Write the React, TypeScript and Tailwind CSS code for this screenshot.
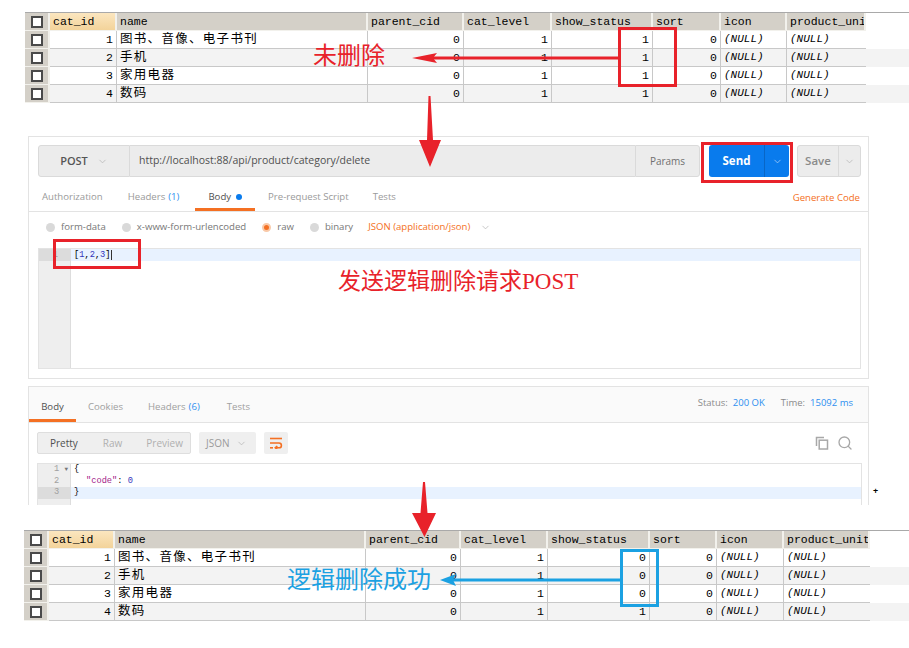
import React from 'react';
import { ChevronDown, Search } from 'lucide-react';

const TOP_W = ['w-[25px]', 'w-[67px]', 'w-[251px]', 'w-[96px]', 'w-[88px]', 'w-[101px]', 'w-[68px]', 'w-[66px]', 'w-[79px]'];
const BOT_W = ['w-[25px]', 'w-[66px]', 'w-[251px]', 'w-[95px]', 'w-[87px]', 'w-[102px]', 'w-[67px]', 'w-[67px]', 'w-[86px]'];
const HEAD = ['cat_id', 'name', 'parent_cid', 'cat_level', 'show_status', 'sort', 'icon', 'product_unit'];
const ROWS = [
  { id: 1, name: '图书、音像、电子书刊' },
  { id: 2, name: '手机' },
  { id: 3, name: '家用电器' },
  { id: 4, name: '数码' },
];

const CheckBox = () => <span className="block w-[12px] h-[12px] border-2 border-[#4a4a4a] bg-white" />;

// navicat style grid
function DbTable({ w, status }: { w: string[]; status: number[] }) {
  const cell = 'shrink-0 overflow-hidden whitespace-nowrap px-[3px] leading-[17px]';
  return (
    <div className="border-t border-[#a9a9a9] font-['Liberation_Mono','Noto_Sans_CJK_SC',monospace] text-[11.5px] text-black">
      <div className="flex h-[18px]">
        <div className={`${w[0]} shrink-0 flex items-center justify-center bg-[#d4d0c8] border-r-2 border-b border-[#f2f1ec]`}>
          <CheckBox />
        </div>
        {HEAD.map((h, i) => (
          <div
            key={h}
            className={`${w[i + 1]} ${cell} border-r-2 border-b border-[#f2f1ec] ${i === 0 ? 'bg-gradient-to-b from-[#fbe6bf] to-[#f3d39a]' : 'bg-[#d4d0c8]'}`}
          >
            {h}
          </div>
        ))}
      </div>
      {ROWS.map((r, ri) => (
        <div key={r.id} className={`flex h-[18px] ${ri % 2 ? 'bg-[#f3f3f3]' : 'bg-white'}`}>
          <div className={`${w[0]} shrink-0 flex items-center justify-center bg-[#d4d0c8] border-r-2 border-b border-[#f2f1ec]`}>
            <CheckBox />
          </div>
          <div className={`${w[1]} ${cell} text-right border-r border-b border-[#c8c8c8]`}>{r.id}</div>
          <div className={`${w[2]} ${cell} pt-[1px] text-[12.5px] leading-[16px] tracking-[1.3px] border-r border-b border-[#c8c8c8]`}>{r.name}</div>
          <div className={`${w[3]} ${cell} text-right border-r border-b border-[#c8c8c8]`}>0</div>
          <div className={`${w[4]} ${cell} text-right border-r border-b border-[#c8c8c8]`}>1</div>
          <div className={`${w[5]} ${cell} text-right border-r border-b border-[#c8c8c8]`}>{status[ri]}</div>
          <div className={`${w[6]} ${cell} text-right border-r border-b border-[#c8c8c8]`}>0</div>
          <div className={`${w[7]} ${cell} italic text-[11px] border-r border-b border-[#c8c8c8]`}>(NULL)</div>
          <div className={`${w[8]} ${cell} italic text-[11px] border-b border-[#c8c8c8]`}>(NULL)</div>
        </div>
      ))}
    </div>
  );
}

const Radio = ({ on }: { on?: boolean }) => (
  <span className={`block w-[9px] h-[9px] rounded-full ${on ? 'bg-[#f47023] border-2 border-[#f9c9a8]' : 'bg-[#d9d9d9]'}`} />
);

const WrapIcon = () => (
  <svg width="14" height="12" viewBox="0 0 14 12" fill="none" stroke="#f47023" strokeWidth="1.6">
    <path d="M1 1.5h12" />
    <path d="M1 6h9a2.4 2.4 0 0 1 0 4.8H6.5" />
    <path d="M8.3 9l-2 1.8 2 1.6" />
    <path d="M1 10.8h3" />
  </svg>
);

const CopyIcon = () => (
  <svg width="14" height="14" viewBox="0 0 14 14" fill="none" stroke="#a8a8a8" strokeWidth="1.5">
    <path d="M9 1.5H1.5V10" />
    <rect x="4.2" y="4.2" width="8.3" height="8.8" />
  </svg>
);

export default function App() {
  return (
    <div className="relative w-[909px] h-[648px] overflow-hidden bg-white">
      {/* before */}
      <div className="pt-[12px] pl-[25px]">
        <DbTable w={TOP_W} status={[1, 1, 1, 1]} />
      </div>

      {/* postman request */}
      <div className="ml-[28px] mt-[33px] w-[841px] h-[243px] border border-[#e3e3e3] bg-white font-['Open_Sans',sans-serif]">
        <div className="flex h-[32px] mt-[8px] ml-[9px] mr-[7px]">
          <div className="w-[92px] flex items-center justify-center gap-[9px] bg-[#ececec] border border-[#dadada] rounded-l-[3px]">
            <span className="text-[11px] font-semibold text-[#555]">POST</span>
            <ChevronDown className="w-[11px] h-[11px] text-[#b0b0b0]" strokeWidth={1.5} />
          </div>
          <div className="flex-1 flex items-center pl-[9px] bg-[#ececec] border-y border-[#dadada] text-[10.5px] text-[#505050]">
            http://localhost:88/api/product/category/delete
          </div>
          <div className="w-[65px] flex items-center justify-center bg-[#ececec] border border-[#dadada] rounded-r-[3px] text-[10px] text-[#707070]">
            Params
          </div>
          <div className="ml-[9px] w-[80px] flex bg-[#097bed] rounded-[3px]">
            <div className="w-[55px] flex items-center justify-center text-[11.5px] font-bold text-white">Send</div>
            <div className="flex-1 flex items-center justify-center border-l border-[#0866c6]">
              <ChevronDown className="w-[11px] h-[11px] text-[#bcd9f8]" strokeWidth={1.5} />
            </div>
          </div>
          <div className="ml-[8px] w-[64px] flex bg-[#ececec] border border-[#dadada] rounded-[3px]">
            <div className="w-[40px] flex items-center justify-center text-[11.5px] font-semibold text-[#8a8a8a]">Save</div>
            <div className="flex-1 flex items-center justify-center border-l border-[#dadada]">
              <ChevronDown className="w-[11px] h-[11px] text-[#b0b0b0]" strokeWidth={1.5} />
            </div>
          </div>
        </div>

        <div className="flex h-[35px] border-b border-[#e3e3e3] text-[9.6px] text-[#9a9a9a]">
          <span className="ml-[13px] flex items-center pt-[6px]">Authorization</span>
          <span className="ml-[25px] flex items-center pt-[6px]">
            Headers <span className="ml-[3px] text-[#2d8ff0]">(1)</span>
          </span>
          <span className="ml-[16px] px-[13px] flex items-center pt-[6px] text-[#505050] shadow-[inset_0_-3px_0_#f47023]">
            Body <span className="ml-[5px] w-[6px] h-[6px] rounded-full bg-[#097bed]" />
          </span>
          <span className="ml-[13px] flex items-center pt-[6px]">Pre-request Script</span>
          <span className="ml-[24px] flex items-center pt-[6px]">Tests</span>
          <span className="ml-auto mr-[8px] flex items-center pt-[9px] text-[#f47023]">Generate Code</span>
        </div>

        <div className="flex items-center h-[36px] pb-[6px] pl-[17px] text-[9.6px] text-[#777]">
          <Radio />
          <span className="ml-[6px]">form-data</span>
          <span className="ml-[16px]"><Radio /></span>
          <span className="ml-[6px]">x-www-form-urlencoded</span>
          <span className="ml-[16px]"><Radio on /></span>
          <span className="ml-[6px]">raw</span>
          <span className="ml-[16px]"><Radio /></span>
          <span className="ml-[6px]">binary</span>
          <span className="ml-[15px] text-[#f47023]">JSON (application/json)</span>
          <ChevronDown className="ml-[10px] w-[11px] h-[11px] text-[#b0b0b0]" strokeWidth={1.5} />
        </div>

        <div className="ml-[9px] mr-[7px] h-[121px] flex border border-[#e3e3e3] font-['Liberation_Mono',monospace] text-[8.7px]">
          <div className="w-[32px] bg-[#eeeeee] border-r border-[#dddddd]">
            <div className="h-[12px] bg-[#dcdcdc] text-right pr-[12px] leading-[12px] text-[#a0a0a0]">1</div>
          </div>
          <div className="flex-1">
            <div className="h-[12px] bg-[#e8f2ff] pl-[3px] leading-[12px]">
              [<span className="text-[#3333bb]">1</span>,<span className="text-[#3333bb]">2</span>,<span className="text-[#3333bb]">3</span>]
              <span className="inline-block w-px h-[10px] bg-[#333] align-middle" />
            </div>
          </div>
        </div>
      </div>

      {/* postman response */}
      <div className="ml-[28px] mt-[7px] w-[841px] h-[119px] overflow-hidden border-x border-t border-[#e3e3e3] font-['Open_Sans',sans-serif]">
        <div className="flex h-[36px] bg-[#fafafa] border-b border-[#e3e3e3] text-[9.6px] text-[#a0a0a0]">
          <span className="w-[47px] flex items-center justify-center pt-[6px] text-[#505050] shadow-[inset_0_-3px_0_#f47023]">Body</span>
          <span className="ml-[12px] flex items-center pt-[6px]">Cookies</span>
          <span className="ml-[25px] flex items-center pt-[6px]">
            Headers <span className="ml-[3px] text-[#2d8ff0]">(6)</span>
          </span>
          <span className="ml-[27px] flex items-center pt-[6px]">Tests</span>
          <div className="ml-auto mr-[15px] flex items-center pb-[2px] text-[9.5px] text-[#8a8a8a]">
            Status:<span className="ml-[5px] text-[#2d8ff0]">200 OK</span>
            <span className="ml-[16px]">Time:</span>
            <span className="ml-[5px] text-[#2d8ff0]">15092 ms</span>
          </div>
        </div>

        <div className="flex items-center mt-[9px] ml-[8px] mr-[15px] h-[22px] text-[10px]">
          <div className="w-[154px] h-full flex items-center bg-[#efefef] border border-[#dedede] rounded-[2px] text-[#b0b0b0]">
            <span className="ml-[12px] text-[#505050]">Pretty</span>
            <span className="ml-[25px]">Raw</span>
            <span className="ml-[24px]">Preview</span>
          </div>
          <div className="ml-[8px] w-[57px] h-full flex items-center bg-[#efefef] rounded-[2px] text-[#9a9a9a]">
            <span className="ml-[7px]">JSON</span>
            <ChevronDown className="ml-[7px] w-[11px] h-[11px] text-[#b0b0b0]" strokeWidth={1.5} />
          </div>
          <div className="ml-[8px] w-[24px] h-full flex items-center justify-center bg-[#efefef] rounded-[2px]">
            <WrapIcon />
          </div>
          <div className="ml-auto flex items-center gap-[8px]">
            <CopyIcon />
            <Search className="w-[16px] h-[16px] text-[#a8a8a8]" strokeWidth={2} />
          </div>
        </div>

        <div className="mt-[9px] ml-[8px] mr-[6px] h-[60px] flex border border-[#e3e3e3] font-['Liberation_Mono',monospace] text-[8.7px] leading-[11.5px]">
          <div className="w-[33px] bg-[#eeeeee] border-r border-[#dddddd] text-[#a0a0a0]">
            <div className="h-[11.5px] pl-[16px]">1 <span className="text-[6px] text-[#777]">▼</span></div>
            <div className="h-[11.5px] pl-[16px]">2</div>
            <div className="h-[11.5px] pl-[16px] bg-[#dcdcdc]">3</div>
          </div>
          <div className="flex-1">
            <div className="h-[11.5px] pl-[3px]">{'{'}</div>
            <div className="h-[11.5px] pl-[15px]">
              <span className="text-[#a31a8a]">"code"</span>: <span className="text-[#3333bb]">0</span>
            </div>
            <div className="h-[11.5px] pl-[3px] bg-[#e8f2ff]">{'}'}</div>
          </div>
        </div>
      </div>

      {/* after */}
      <div className="mt-[25px] pl-[24px]">
        <DbTable w={BOT_W} status={[0, 0, 0, 1]} />
      </div>

      {/* annotations */}
      <svg className="absolute inset-0 pointer-events-none" width="909" height="648">
        <polygon points="428.5,96 430.5,96 433,140 441,140 430,167 419,140 427,140" fill="#e8222a" />
        <polygon points="423,482 425,482 427.5,513 436,513 424.5,537 412,513 420.5,513" fill="#e8222a" />
        <rect x="432" y="56.5" width="188" height="3" fill="#e8222a" />
        <polygon points="412,58 437,53 433,58 437,63" fill="#e8222a" />
        <rect x="450" y="578.5" width="170" height="3" fill="#1ba1e2" />
        <polygon points="440,580 456,574 453,580 456,586" fill="#1ba1e2" />
      </svg>
      <span className="absolute left-[313px] top-[42px] text-[24px] leading-[24px] text-[#e8222a] font-['Noto_Sans_CJK_SC',sans-serif]">未删除</span>
      <div className="absolute left-[618px] top-[27px] w-[59px] h-[60px] border-[3px] border-[#e8222a]" />
      <div className="absolute left-[701px] top-[142px] w-[92px] h-[41px] border-[3px] border-[#e8222a]" />
      <div className="absolute left-[53px] top-[239px] w-[88px] h-[30px] border-[3px] border-[#e8222a]" />
      <span className="absolute left-[338px] top-[270px] text-[23px] leading-[24px] text-[#e8222a] font-['Liberation_Serif','Noto_Sans_CJK_SC',serif]">发送逻辑删除请求POST</span>
      <span className="absolute left-[287px] top-[566px] text-[24px] leading-[24px] text-[#1ba1e2] font-['Noto_Sans_CJK_SC',sans-serif]">逻辑删除成功</span>
      <div className="absolute left-[620px] top-[549px] w-[39px] h-[58px] border-[3px] border-[#1ba1e2]" />
      <span className="absolute left-[873px] top-[484px] text-[9px] font-bold text-black">+</span>
    </div>
  );
}
